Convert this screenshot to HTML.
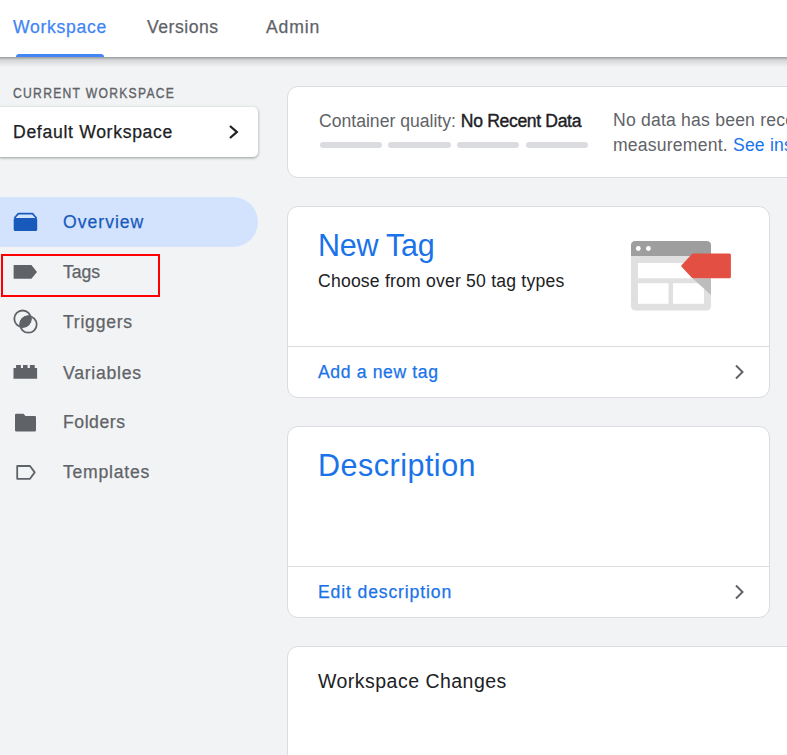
<!DOCTYPE html>
<html><head><meta charset="utf-8">
<style>
html,body{margin:0;padding:0;}
body{width:787px;height:755px;overflow:hidden;background:#f1f3f4;position:relative;font-family:"Liberation Sans",sans-serif;}
.t{position:absolute;white-space:nowrap;line-height:1;}
.hdr{position:absolute;left:0;top:0;width:787px;height:57px;background:#fff;}
.hsh{position:absolute;left:0;top:57px;width:787px;height:10px;background:linear-gradient(rgba(0,0,0,0.36),rgba(0,0,0,0.12) 30%,rgba(0,0,0,0) 100%);}
.card{position:absolute;background:#fff;border:1px solid #dadce0;border-radius:11px;box-sizing:border-box;}
.div{position:absolute;left:0;right:0;height:1px;background:#dadce0;}
.med{-webkit-text-stroke:0.25px currentColor;}
</style></head><body>

<div class="hdr"></div>
<div class="hsh"></div>
<div class="t med" style="left:13px;top:19px;font-size:17.6px;letter-spacing:0.7px;color:#4285f4">Workspace</div>
<div class="t med" style="left:147px;top:19px;font-size:17.6px;letter-spacing:0.52px;color:#5f6368">Versions</div>
<div class="t med" style="left:266px;top:19px;font-size:17.6px;letter-spacing:0.85px;color:#5f6368">Admin</div>
<div style="position:absolute;left:16px;top:54px;width:88px;height:3px;background:#4285f4;border-radius:3px 3px 0 0"></div>

<div class="t" style="left:13px;top:86.5px;font-size:13.8px;letter-spacing:1.45px;color:#5f6368;transform:scaleX(0.88);transform-origin:0 0;-webkit-text-stroke:0.35px #5f6368">CURRENT WORKSPACE</div>
<div style="position:absolute;left:0;top:107px;width:258px;height:50px;background:#fff;border-radius:0 5px 5px 0;box-shadow:0 1px 2px rgba(60,64,67,0.3),0 1px 3px 1px rgba(60,64,67,0.15)"></div>
<div class="t med" style="left:13px;top:124px;font-size:17.6px;letter-spacing:0.69px;color:#202124">Default Workspace</div>
<svg style="position:absolute;left:226px;top:124px" width="14" height="16" viewBox="0 0 14 16"><path d="M4 2 L10.8 8 L4 14" fill="none" stroke="#202124" stroke-width="2.3"/></svg>

<div style="position:absolute;left:0;top:197px;width:258px;height:50px;background:#d3e3fd;border-radius:0 25px 25px 0"></div>
<svg style="position:absolute;left:13px;top:212px" width="25" height="20" viewBox="0 0 25 20"><path d="M1.2 6.2 L5.3 1.6 L19.5 1.6 L23.6 6.2" fill="none" stroke="#185abc" stroke-width="1.6" stroke-linejoin="round"/><rect x="0.7" y="5.9" width="23.5" height="13" rx="1.5" fill="#185abc"/></svg>
<div class="t med" style="left:63px;top:214px;font-size:17.6px;letter-spacing:1.0px;color:#185abc">Overview</div>

<div style="position:absolute;left:1px;top:254px;width:159px;height:43px;border:2px solid #f00;box-sizing:border-box"></div>
<svg style="position:absolute;left:13px;top:265px" width="25" height="14" viewBox="0 0 25 14"><path d="M0.6 0 L18.4 0 L24 6.9 L18.4 13.8 L0.6 13.8 Z" fill="#5f6368"/></svg>
<div class="t med" style="left:63px;top:264px;font-size:17.6px;color:#5f6368">Tags</div>

<svg style="position:absolute;left:12px;top:309px" width="27" height="26" viewBox="0 0 27 26"><defs><clipPath id="c1"><circle cx="10.6" cy="9.8" r="8.8"/></clipPath></defs><circle cx="16.4" cy="15.4" r="8.8" fill="#5f6368" clip-path="url(#c1)"/><circle cx="10.6" cy="9.8" r="8.3" fill="none" stroke="#5f6368" stroke-width="1.8"/><circle cx="16.4" cy="15.4" r="8.3" fill="none" stroke="#5f6368" stroke-width="1.8"/></svg>
<div class="t med" style="left:63px;top:314px;font-size:17.6px;letter-spacing:0.75px;color:#5f6368">Triggers</div>

<svg style="position:absolute;left:13px;top:364px" width="25" height="15" viewBox="0 0 25 15"><path d="M0.5 4 L3.1 4 L3.1 1 L7.9 1 L7.9 4 L10 4 L10 1 L14.6 1 L14.6 4 L16.9 4 L16.9 1 L21.7 1 L21.7 4 L24.1 4 L24.1 14.8 L0.5 14.8 Z" fill="#5f6368"/></svg>
<div class="t med" style="left:63px;top:364.5px;font-size:17.6px;letter-spacing:0.74px;color:#5f6368">Variables</div>

<svg style="position:absolute;left:15px;top:413px" width="22" height="19" viewBox="0 0 22 19"><path d="M1.2 0.7 L8.5 0.7 L10.5 2.9 L19.8 2.9 Q21 2.9 21 4.1 L21 17.3 Q21 18.5 19.8 18.5 L1.2 18.5 Q0 18.5 0 17.3 L0 1.9 Q0 0.7 1.2 0.7 Z" fill="#5f6368"/></svg>
<div class="t med" style="left:63px;top:414px;font-size:17.6px;letter-spacing:0.55px;color:#5f6368">Folders</div>

<svg style="position:absolute;left:15px;top:464px" width="22" height="17" viewBox="0 0 22 17"><path d="M2.2 2 L15 2 L19.7 8.4 L15 14.8 L2.2 14.8 Z" fill="none" stroke="#5f6368" stroke-width="1.8" stroke-linejoin="round"/></svg>
<div class="t med" style="left:63px;top:464px;font-size:17.6px;letter-spacing:0.76px;color:#5f6368">Templates</div>

<!-- container quality card -->
<div class="card" style="left:287px;top:86px;width:520px;height:92px"></div>
<div class="t" style="left:319px;top:113px;font-size:17.6px;color:#5f6368">Container quality: <span style="color:#202124;letter-spacing:-0.35px;-webkit-text-stroke:0.4px #202124">No Recent Data</span></div>
<div style="position:absolute;left:320px;top:142px;width:62px;height:6px;border-radius:3px;background:#dadce0"></div>
<div style="position:absolute;left:388px;top:142px;width:63px;height:6px;border-radius:3px;background:#dadce0"></div>
<div style="position:absolute;left:457px;top:142px;width:62px;height:6px;border-radius:3px;background:#dadce0"></div>
<div style="position:absolute;left:526px;top:142px;width:62px;height:6px;border-radius:3px;background:#dadce0"></div>
<div class="t" style="left:613px;top:112px;font-size:17.6px;letter-spacing:0.2px;color:#5f6368">No data has been received</div>
<div class="t" style="left:613px;top:137px;font-size:17.6px;letter-spacing:0.2px;color:#5f6368">measurement. <span style="color:#1a73e8">See insights</span></div>

<!-- new tag card -->
<div class="card" style="left:287px;top:206px;width:483px;height:192px;overflow:hidden">
  <div class="div" style="top:139px"></div>
</div>
<div class="t" style="left:318px;top:230px;font-size:30.5px;letter-spacing:-0.25px;color:#1a73e8">New Tag</div>
<div class="t" style="left:318px;top:273px;font-size:17.6px;letter-spacing:0.2px;color:#202124">Choose from over 50 tag types</div>
<div class="t med" style="left:318px;top:364px;font-size:17.6px;letter-spacing:0.63px;color:#1a73e8">Add a new tag</div>
<svg style="position:absolute;left:732px;top:363px" width="14" height="18" viewBox="0 0 14 18"><path d="M4 2.5 L10.5 9 L4 15.5" fill="none" stroke="#5f6368" stroke-width="2"/></svg>

<svg style="position:absolute;left:631px;top:240px" width="101" height="71" viewBox="0 0 101 71">
  <rect x="0" y="1" width="80" height="69.6" rx="4.5" fill="#e0e0e0"/>
  <path d="M4.5 1 L75.5 1 Q80 1 80 5.5 L80 15.9 L0 15.9 L0 5.5 Q0 1 4.5 1 Z" fill="#9e9e9e"/>
  <circle cx="7.3" cy="8.5" r="2.4" fill="#fff"/>
  <circle cx="17.4" cy="8.5" r="2.4" fill="#fff"/>
  <rect x="7" y="23" width="66" height="15.3" fill="#fff"/>
  <rect x="7" y="43.2" width="30.5" height="20.6" fill="#fff"/>
  <rect x="42" y="43.2" width="31" height="20.6" fill="#fff"/>
  <path d="M61.5 38.3 L80 38.3 L80 55 Z" fill="#bdbdbd"/>
  <path d="M51.9 25.95 L62 15.1 L98.4 15.1 L98.4 36.8 L62 36.8 Z" fill="#e34f42" stroke="#e34f42" stroke-width="3" stroke-linejoin="round"/>
</svg>

<!-- description card -->
<div class="card" style="left:287px;top:426px;width:483px;height:192px;overflow:hidden">
  <div class="div" style="top:139px"></div>
</div>
<div class="t" style="left:318px;top:450px;font-size:30.5px;letter-spacing:0.5px;color:#1a73e8">Description</div>
<div class="t med" style="left:318px;top:584px;font-size:17.6px;letter-spacing:0.86px;color:#1a73e8">Edit description</div>
<svg style="position:absolute;left:732px;top:583px" width="14" height="18" viewBox="0 0 14 18"><path d="M4 2.5 L10.5 9 L4 15.5" fill="none" stroke="#5f6368" stroke-width="2"/></svg>

<!-- workspace changes card -->
<div class="card" style="left:287px;top:646px;width:520px;height:200px"></div>
<div class="t" style="left:318px;top:671.5px;font-size:19.5px;letter-spacing:0.48px;color:#202124">Workspace Changes</div>

</body></html>
